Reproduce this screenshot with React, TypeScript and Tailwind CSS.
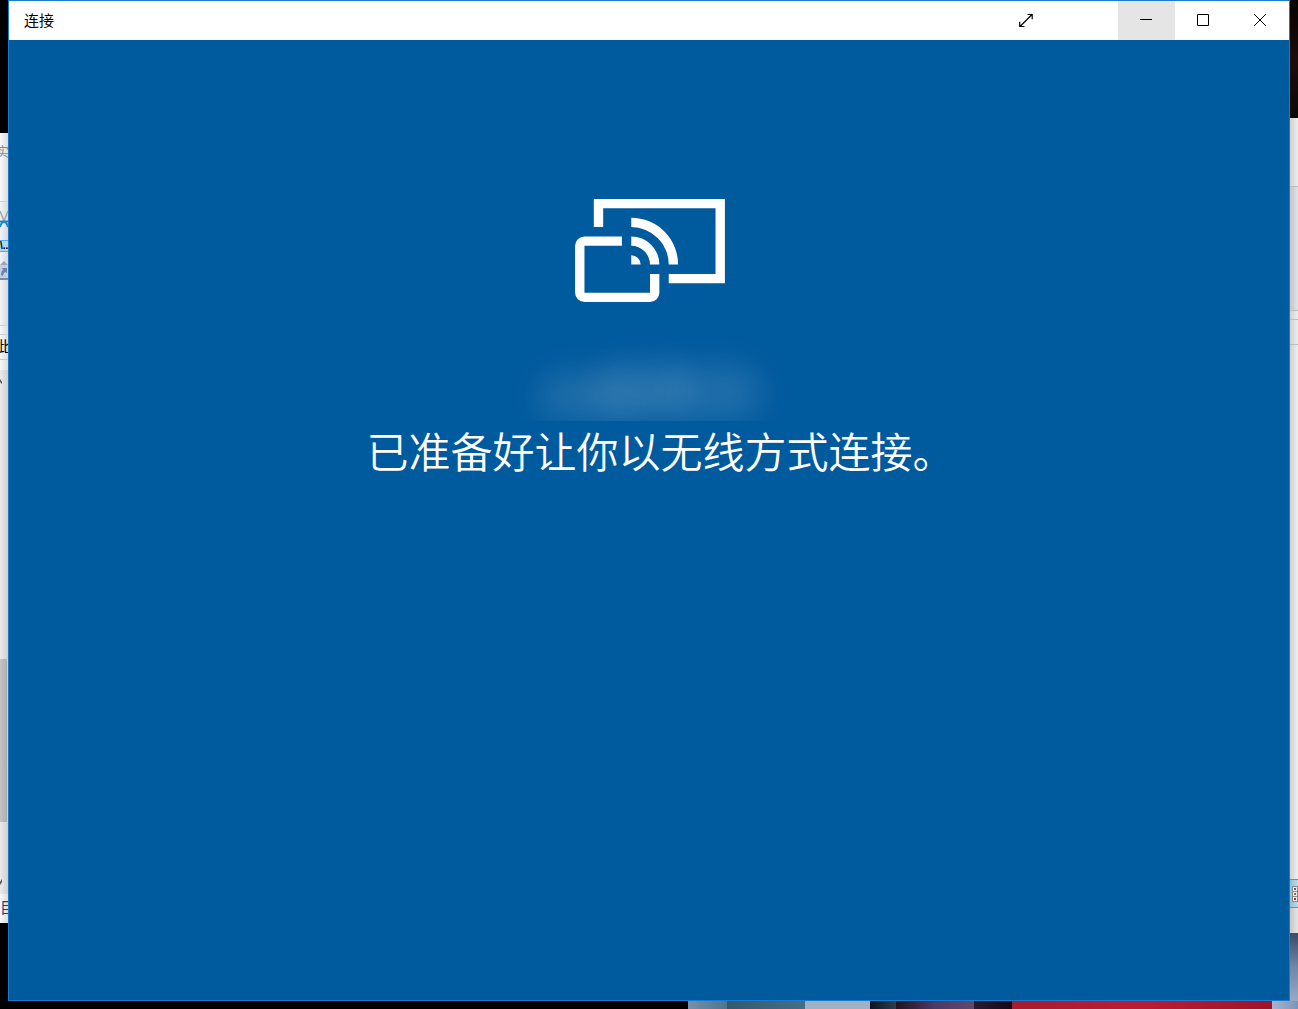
import type { ReactNode } from "react";

// 标题栏按钮
function CaptionButton({
  label,
  className = "",
  children,
}: {
  label: string;
  className?: string;
  children: ReactNode;
}) {
  return (
    <button
      type="button"
      aria-label={label}
      className={`flex h-full items-center justify-center hover:bg-[#e5e5e5] ${className}`}
    >
      {children}
    </button>
  );
}

function TitleBar() {
  return (
    <header className="flex h-[39px] items-center bg-white text-black">
      <h1 className="flex-1 pb-0.5 pl-[15px] text-[15px] leading-5">连接</h1>
      <CaptionButton label="全屏" className="mr-16 w-14">
        <svg width="16" height="16" viewBox="0 0 16 16" fill="none" stroke="currentColor" strokeWidth="1.2">
          <path d="M2 13.5 14 1.5M9.5 1.5h4.7v4.7M1.7 8.8v4.7h4.7" />
        </svg>
      </CaptionButton>
      <CaptionButton label="最小化" className="w-[57px] bg-[#e5e5e5]">
        <svg width="13" height="13" viewBox="0 0 13 13" shapeRendering="crispEdges">
          <path d="M0 5h12v1H0z" />
        </svg>
      </CaptionButton>
      <CaptionButton label="最大化" className="w-[57px]">
        <svg width="13" height="13" viewBox="0 0 13 13" fill="none" stroke="currentColor">
          <path d="M.5.5h11v11H.5z" />
        </svg>
      </CaptionButton>
      <CaptionButton label="关闭" className="w-[57px]">
        <svg width="13" height="13" viewBox="0 0 13 13" fill="none" stroke="currentColor">
          <path d="M0 0l12 12M12 0L0 12" />
        </svg>
      </CaptionButton>
    </header>
  );
}

function CastIcon() {
  return (
    <svg width="150" height="103" viewBox="0 0 16 11" fill="white" aria-hidden="true">
      <path d="M2 0h14v9h-6V8h5V1H3v2H2z" />
      <path d="M1 4h4v1H1v5h7V8h1v2a1 1 0 0 1-1 1H1a1 1 0 0 1-1-1V5a1 1 0 0 1 1-1z" />
      <path d="M6 6a1 1 0 0 1 1 1H6z" />
      <path d="M6 4a3 3 0 0 1 3 3H8a2 2 0 0 0-2-2z" />
      <path d="M6 2a5 5 0 0 1 5 5h-1a4 4 0 0 0-4-4z" />
    </svg>
  );
}

// 左侧露出的资源管理器窗口
function LeftBackdrop() {
  return (
    <div className="flex w-2 flex-col overflow-hidden" aria-hidden="true">
      <div className="h-[133px]" />
      <div className="flex h-[68px] items-center bg-linear-to-r from-[#fafafa] to-[#dcdcdc] pb-8 text-[13px] text-[#8a8a8a]">
        <span className="-ml-1">实</span>
      </div>
      <div className="flex h-[125px] flex-col border-y border-[#cfd0d2] bg-linear-to-r from-[#f3f4f6] to-[#d6d8dc] pt-2">
        <svg width="8" height="18" viewBox="0 0 8 18" fill="none">
          <path d="M0 1l4 10M8 1L4 11" stroke="#a3a3a3" strokeWidth="1.5" />
          <path d="M0 11.5h8M0 17c1-4 2-5 4-5s3 1 4 5" stroke="#2486bf" strokeWidth="2" />
        </svg>
        <div className="mt-3 h-3 border-y border-[#5fa9d6] bg-[#aed6ef] font-['Liberation_Sans',sans-serif] text-[10px] leading-[9px] font-bold text-black">
          \..
        </div>
        <svg className="mt-2" width="8" height="20" viewBox="0 0 8 20">
          <path d="M0 5h8v13H0z" fill="#c6cfdd" />
          <path d="M0 5l4-4 4 4z" fill="#9aa5b8" />
          <path d="M1 15c0-3 1-4 2-5L2 8h5v5L5 12c-1 1-2 2-2 4z" fill="#6b84ad" />
          <path d="M0 18h8v2H0z" fill="#7888ad" />
        </svg>
      </div>
      <div className="h-2 bg-linear-to-r from-[#f8f8f8] to-[#dcdcdc]" />
      <div className="h-[26px] overflow-hidden border-y border-[#cccccc] bg-linear-to-r from-[#fafafa] to-[#dcdcdc] text-[15px] leading-[22px] text-black">
        <div className="-ml-1 w-4">此</div>
      </div>
      <div className="h-[10px] bg-linear-to-r from-[#f8f8f8] to-[#dcdcdc]" />
      <div className="flex h-[524px] flex-col bg-linear-to-r from-[#ebebeb] to-[#cfcfcf]">
        <svg width="8" height="24" viewBox="0 0 8 24">
          <path d="M0 9l2 3v2l-2-2z" fill="#505050" />
        </svg>
        <div className="mt-[265px] h-[163px] w-[7px] bg-linear-to-r from-[#c4c4c4] to-[#aeaeae]" />
        <svg className="mt-12" width="8" height="24" viewBox="0 0 8 24">
          <path d="M2 9v3l-2 3v-3z" fill="#505050" />
        </svg>
      </div>
      <div className="h-[29px] bg-linear-to-r from-[#fafafa] to-[#dcdcdc] text-[15px] leading-[26px] text-[#1c3f6e]">
        目
      </div>
    </div>
  );
}

// 右侧露出的窗口和桌面壁纸
function RightBackdrop() {
  return (
    <div className="flex w-2 flex-col overflow-hidden" aria-hidden="true">
      <div className="h-[118px] bg-linear-to-b from-[#050303] via-[#1c0d0b] to-[#0c0808]" />
      <div className="h-[68px] bg-linear-to-r from-[#cfcfcf] to-[#eeeeee]" />
      <div className="h-[125px] border-y border-[#bdbdbd] bg-linear-to-r from-[#c4c5c8] to-[#e2e3e6]" />
      <div className="h-2 bg-linear-to-r from-[#cfcfcf] to-[#eeeeee]" />
      <div className="h-[26px] border-y border-[#bdbdbd] bg-linear-to-r from-[#cfcfcf] to-[#eeeeee]" />
      <div className="h-[534px] bg-linear-to-r from-[#cfcfcf] to-[#f0f0f0]" />
      <div className="flex h-[29px] items-center justify-end border-y border-[#4b9bc0] bg-linear-to-r from-[#93bfd3] to-[#b9dbe9]">
        <svg width="6" height="16" viewBox="0 0 6 16">
          <path d="M0 0h6v16H0z" fill="#888" />
          <path d="M1 1h4v4H1zM1 6h4v4H1zM1 11h4v4H1z" fill="#eee" />
          <path d="M2 2h2v2H2z" fill="#2c6a99" />
          <path d="M2 7h2v2H2z" fill="#8a6a40" />
          <path d="M2 12h2v2H2z" fill="#c02020" />
        </svg>
      </div>
      <div className="h-[25px] bg-linear-to-r from-[#c4c4c4] to-[#e6e6e6]" />
      <div className="flex-1 bg-linear-to-b from-[#3c4b66] via-[#7087a8] to-[#98a9c4]" />
    </div>
  );
}

// 底部露出的桌面壁纸
function BottomBackdrop() {
  return (
    <div className="flex h-2" aria-hidden="true">
      <div className="w-[53%]" />
      <div className="w-[3%] bg-linear-to-r from-[#7890a8] to-[#4f7590]" />
      <div className="flex-1 bg-linear-to-r from-[#35586e] to-[#456f86]" />
      <div className="w-[5%] bg-[#9fb1c4]" />
      <div className="w-[2%] bg-linear-to-r from-[#0c1420] to-[#2c3e50]" />
      <div className="w-[6%] bg-linear-to-r from-[#24121f] via-[#4a3a66] to-[#62486c]" />
      <div className="w-[3%] bg-linear-to-r from-[#2a1c30] to-[#120a14]" />
      <div className="w-[20%] bg-linear-to-r from-[#a81c30] via-[#bd1b34] to-[#9e1428]" />
      <div className="w-[2%] bg-linear-to-r from-[#a8b4cc] to-[#7c94b8]" />
    </div>
  );
}

export default function App() {
  return (
    <div className="flex min-h-screen flex-col bg-black font-['Noto_Sans_CJK_SC',sans-serif]">
      <div className="flex flex-1">
        <LeftBackdrop />
        <div className="flex flex-1 flex-col border border-[#1a7bd0] bg-[#005a9e]">
          <TitleBar />
          <main className="flex flex-1 flex-col items-center pt-[159px] pl-0.5 text-white">
            <CastIcon />
            {/* 设备名称（已模糊处理） */}
            <div className="mt-7 flex h-[91px] w-80 items-end justify-center overflow-hidden" aria-hidden="true">
              <div className="h-12 w-28 rounded-full bg-white/12 blur-lg" />
              <div className="-ml-14 h-16 w-24 rounded-full bg-white/8 blur-lg" />
              <div className="-ml-10 h-14 w-28 rounded-full bg-white/12 blur-lg" />
            </div>
            <p className="text-center text-[42px] leading-[58px] font-[350] [font-feature-settings:'halt']">
              已准备好让你以无线方式连接。
            </p>
          </main>
        </div>
        <RightBackdrop />
      </div>
      <BottomBackdrop />
    </div>
  );
}
